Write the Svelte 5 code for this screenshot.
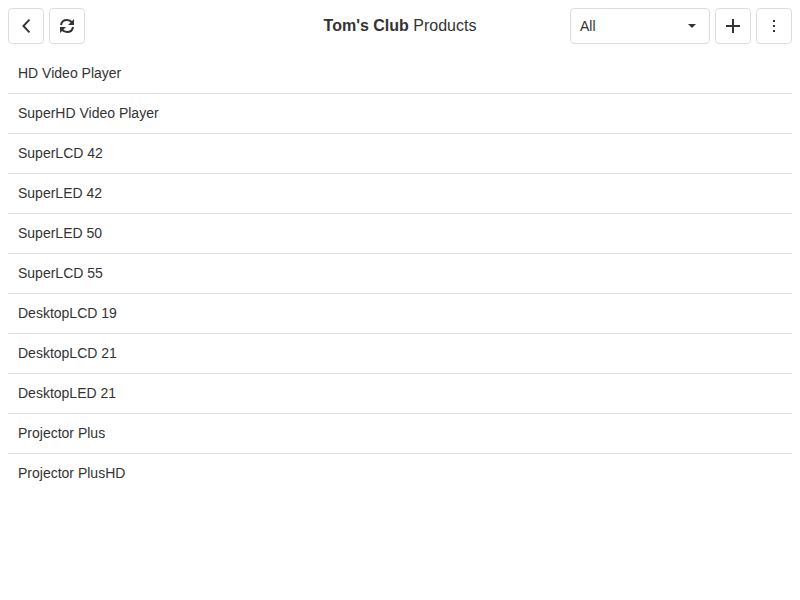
<script>
  const products = [
    'HD Video Player', 'SuperHD Video Player', 'SuperLCD 42', 'SuperLED 42',
    'SuperLED 50', 'SuperLCD 55', 'DesktopLCD 19', 'DesktopLCD 21',
    'DesktopLED 21', 'Projector Plus', 'Projector PlusHD'
  ];
</script>

<div class="page">
  <header class="toolbar">
    <div class="group">
      <button class="btn" aria-label="Back">
        <svg width="18" height="18" viewBox="0 0 18 18"><path d="M12.5 2.700 6.400 9l6.100 6.300" fill="none" stroke="#333" stroke-width="1.900" /></svg>
      </button>
      <button class="btn" aria-label="Refresh">
        <svg width="18" height="18" viewBox="0 0 18 18">
          <path d="M3 8C3.500 5 5.800 3 9 3c2.100 0 3.800.9 5 2.400M15 10C14.500 13 12.200 15 9 15c-2.100 0-3.800-.9-5-2.400" fill="none" stroke="#333" stroke-width="2" />
          <path d="M16 2v6h-6zM2 16v-6h6z" fill="#333" />
        </svg>
      </button>
    </div>
    <div class="title"><b>Tom's Club</b> Products</div>
    <div class="group end">
      <button class="select">
        <span>All</span>
        <svg width="18" height="18" viewBox="0 0 18 18"><path d="M5 7h8l-4 4z" fill="#333" /></svg>
      </button>
      <button class="btn" aria-label="Add">
        <svg width="18" height="18" viewBox="0 0 18 18"><path d="M8 2h2v6h6v2h-6v6H8v-6H2V8h6z" fill="#333" /></svg>
      </button>
      <button class="btn" aria-label="More">
        <svg width="18" height="18" viewBox="0 0 18 18"><path d="M8 3h2v2H8zM8 8h2v2H8zM8 13h2v2H8z" fill="#333" /></svg>
      </button>
    </div>
  </header>
  <ul class="list">
    {#each products as product}
      <li>{product}</li>
    {/each}
  </ul>
</div>

<style>
  .page {
    box-sizing: border-box;
    height: 600px;
    padding: 8px;
    background: #fff;
    color: #333;
    font: 14px/19px "Liberation Sans", Arial, sans-serif;
  }
  .toolbar {
    display: grid;
    grid-template-columns: 1fr auto 1fr;
    align-items: center;
    height: 36px;
  }
  .group {
    display: flex;
    gap: 5px;
  }
  .end {
    justify-content: flex-end;
  }
  .btn, .select {
    box-sizing: border-box;
    display: flex;
    align-items: center;
    justify-content: center;
    width: 36px;
    height: 36px;
    margin: 0;
    padding: 0;
    border: 1px solid #ddd;
    border-radius: 4px;
    background: #fff;
    color: inherit;
    font: inherit;
  }
  .select {
    width: 140px;
    padding: 0 8px 0 9px;
    justify-content: space-between;
  }
  svg {
    display: block;
    flex: none;
  }
  .title {
    font-size: 16px;
    line-height: 18px;
    white-space: nowrap;
  }
  .list {
    margin: 10px 0 0;
    padding: 0;
    list-style: none;
  }
  li {
    padding: 10px;
  }
  li + li {
    border-top: 1px solid #ddd;
  }
</style>
